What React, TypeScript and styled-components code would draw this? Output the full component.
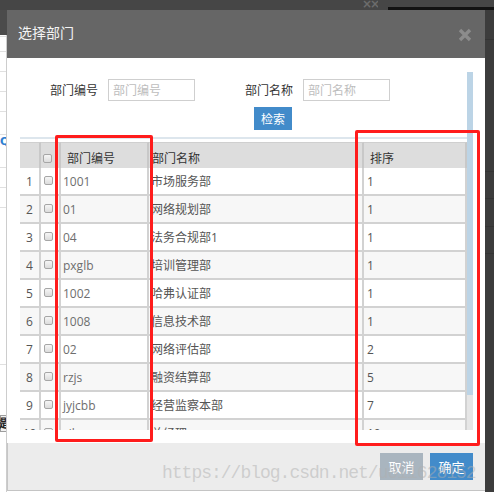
import React from 'react';
import styled, { createGlobalStyle } from 'styled-components';

const GlobalStyle = createGlobalStyle`
  html, body {
    margin: 0;
    padding: 0;
    background: #3c3c3c;
  }
  body {
    font-family: "Open Sans", "Noto Sans CJK SC", sans-serif;
    font-size: 12px;
  }
  * {
    box-sizing: border-box;
  }
`;

const Screen = styled.div`
  position: relative;
  width: 494px;
  height: 492px;
  overflow: hidden;
  display: flex;
  flex-direction: column;
  background: #3c3c3c;
`;

const TopBar = styled.div`
  flex: none;
  height: 10px;
  display: flex;
  align-items: flex-end;
  background: #464646;
`;

const TopGlyph = styled.span`
  align-self: flex-start;
  margin-left: 362px;
  width: 16px;
  height: 10px;
  overflow: hidden;
  color: #6c6c6c;
  font: bold 12px/9px "DejaVu Sans", sans-serif;
  letter-spacing: -2px;
`;

const TopSpacer = styled.div`
  flex: 1;
`;

const BlackBand = styled.div`
  width: 106px;
  height: 3px;
  background: #121212;
`;

const MainRow = styled.div`
  flex: 1;
  display: flex;
`;

const LeftStrip = styled.div`
  width: 7px;
  display: flex;
  flex-direction: column;
`;

const DarkCap = styled.div`
  height: 25px;
  background: #4b4b4b;
`;

const Ledger = styled.div`
  flex: 1;
  display: flex;
  flex-direction: column;
  background: #fff;
  border-right: 1px solid #cdcdcd;
  overflow: hidden;
`;

const LedgerRow = styled.div<{ $h: number; $line?: boolean }>`
  flex: none;
  height: ${p => p.$h}px;
  border-bottom: ${p => (p.$line ? '1px solid #e0e0e0' : 'none')};
  display: flex;
  align-items: center;
  overflow: hidden;
  color: #2f7fd1;
  font: bold 11px/1 "DejaVu Sans", sans-serif;
`;

const CutButton = styled.div`
  width: 14px;
  height: 17px;
  border: 1px solid #9d9d9d;
  background: #f2f2f2;
  color: #222;
  font-size: 12px;
  line-height: 15px;
  text-indent: -5px;
  white-space: nowrap;
`;

const RightStrip = styled.div`
  flex: 1;
  display: flex;
  flex-direction: column;
`;

const ShadeRow = styled.div<{ $h: number }>`
  flex: none;
  height: ${p => p.$h}px;
  border-bottom: 1px solid #343434;
`;

const Modal = styled.div`
  width: 478px;
  display: flex;
  flex-direction: column;
  background: #fff;
`;

const Header = styled.div`
  flex: none;
  height: 48px;
  display: flex;
  align-items: center;
  justify-content: space-between;
  padding: 0 13px 0 11px;
  background: #666666;
`;

const Title = styled.div`
  margin-top: -4px;
  color: #f3f3f3;
  font-size: 14px;
`;

const CloseIcon = styled.svg`
  margin-top: 2px;
  display: block;
`;

const Body = styled.div`
  flex: none;
  height: 385px;
  display: flex;
  padding: 14px 12px 13px 13px;
`;

const ScrollContent = styled.div`
  width: 447px;
  height: 358px;
  overflow: hidden;
`;

const ScrollTrack = styled.div`
  width: 6px;
  height: 358px;
  background: #e6e6e6;
`;

const ScrollThumb = styled.div`
  height: 323px;
  background: #bcd4e6;
`;

const SearchRow = styled.div`
  margin-top: 7px;
  height: 22px;
  display: flex;
  align-items: center;
  padding-left: 30px;
`;

const FieldLabel = styled.span<{ $gap?: number }>`
  margin-left: ${p => p.$gap || 0}px;
  margin-right: 10px;
  color: #333;
  font-size: 12px;
`;

const FieldInput = styled.input`
  width: 87px;
  height: 22px;
  padding: 0 4px;
  border: 1px solid #cfcfcf;
  outline: none;
  font-family: "Open Sans", "Noto Sans CJK SC", sans-serif;
  font-size: 12px;
  color: #333;
  &::placeholder {
    color: #bdbdbd;
  }
`;

const ButtonRow = styled.div`
  margin-top: 6px;
  padding-left: 234px;
`;

const SearchButton = styled.button`
  width: 38px;
  height: 23px;
  padding: 0;
  border: none;
  background: #428bca;
  color: #fff;
  font-family: "Open Sans", "Noto Sans CJK SC", sans-serif;
  font-size: 12px;
`;

const Divider = styled.div`
  margin-top: 7px;
  height: 2px;
  background: #dde6ed;
`;

const Grid = styled.div`
  margin-top: 3px;
  display: grid;
  grid-template-columns: 21px 20px 88px 215px 103px;
`;

const HeadCell = styled.div<{ $indent?: number; $center?: boolean }>`
  height: 26px;
  display: flex;
  align-items: center;
  justify-content: ${p => (p.$center ? 'center' : 'flex-start')};
  padding: 4px 0 0 ${p => p.$indent || 0}px;
  background: #dddddd;
  border-top: 1px solid #cfcfcf;
  border-right: 2px solid #c8c8c8;
  color: #333;
  font-size: 12px;
`;

const Cell = styled.div<{ $shade: boolean; $indent?: number; $center?: boolean; $color?: string }>`
  height: 28px;
  display: flex;
  align-items: center;
  justify-content: ${p => (p.$center ? 'center' : 'flex-start')};
  padding-left: ${p => p.$indent || 0}px;
  background: ${p => (p.$shade ? '#f7f7f7' : '#fff')};
  border-right: 2px solid #d2d2d2;
  border-bottom: 2px solid #d2d2d2;
  color: ${p => p.$color || '#555'};
  font-size: 12px;
  white-space: nowrap;
  overflow: hidden;
`;

const Check = styled.span<{ $head?: boolean }>`
  display: block;
  width: 9px;
  height: 9px;
  margin-top: ${p => (p.$head ? '6px' : '-1px')};
  border: 1px solid #a6a6a6;
  border-radius: 2px;
  background: linear-gradient(#f6f6f6, #dcdcdc);
`;

const Footer = styled.div`
  flex: none;
  height: 48px;
  display: flex;
  justify-content: flex-end;
  align-items: flex-start;
  gap: 7px;
  padding: 10px 12px 0 0;
  background: #ececec;
  border-left: 1px solid #c6c6c6;
  border-bottom: 1px solid #c4c4c4;
`;

const FooterButton = styled.button<{ $primary?: boolean }>`
  width: 43px;
  height: 27px;
  padding: 0;
  border: none;
  background: ${p => (p.$primary ? '#428bca' : '#a9b5bf')};
  color: #fff;
  font-family: "Open Sans", "Noto Sans CJK SC", sans-serif;
  font-size: 13px;
`;

const Watermark = styled.div`
  position: absolute;
  left: 162px;
  top: 464px;
  color: rgba(175, 175, 175, 0.5);
  font-family: "Liberation Mono", monospace;
  font-size: 18px;
  line-height: 18px;
  letter-spacing: -1px;
  white-space: nowrap;
  pointer-events: none;
`;

const Marker = styled.div<{ $x: number; $y: number; $w: number; $h: number }>`
  position: absolute;
  left: ${p => p.$x}px;
  top: ${p => p.$y}px;
  width: ${p => p.$w}px;
  height: ${p => p.$h}px;
  border: 3px solid #ff1c1c;
  border-radius: 2px;
  pointer-events: none;
`;

const departments = [
  { code: '1001', name: '市场服务部', sort: '1' },
  { code: '01', name: '网络规划部', sort: '1' },
  { code: '04', name: '法务合规部1', sort: '1' },
  { code: 'pxglb', name: '培训管理部', sort: '1' },
  { code: '1002', name: '哈弗认证部', sort: '1' },
  { code: '1008', name: '信息技术部', sort: '1' },
  { code: '02', name: '网络评估部', sort: '2' },
  { code: 'rzjs', name: '融资结算部', sort: '5' },
  { code: 'jyjcbb', name: '经营监察本部', sort: '7' },
  { code: 'zjl', name: '总经理', sort: '10' },
  { code: 'cwb', name: '财务部', sort: '11' },
];

const ledgerRows = [2, 15, 20, 20, 20, 23];
const shadeRows = [30, 132, 27, 28, 27];

export default function App() {
  return (
    <>
      <GlobalStyle />
      <Screen>
        <TopBar>
          <TopGlyph>××</TopGlyph>
          <TopSpacer />
          <BlackBand />
        </TopBar>
        <MainRow>
          <LeftStrip>
            <DarkCap />
            <Ledger>
              {ledgerRows.map((h, i) => (
                <LedgerRow key={i} $h={h} $line />
              ))}
              <LedgerRow $h={12}>Q</LedgerRow>
              <LedgerRow $h={21} $line />
              <LedgerRow $h={20} $line />
              <LedgerRow $h={20} $line />
              <LedgerRow $h={157} $line />
              <LedgerRow $h={50} />
              <LedgerRow $h={17}>
                <CutButton>提示</CutButton>
              </LedgerRow>
            </Ledger>
          </LeftStrip>

          <Modal>
            <Header>
              <Title>选择部门</Title>
              <CloseIcon width="14" height="14" viewBox="0 0 14 14">
                <path d="M2 2 L12 12 M12 2 L2 12" stroke="#8c8c8c" strokeWidth="3.4" />
              </CloseIcon>
            </Header>

            <Body>
              <ScrollContent>
                <SearchRow>
                  <FieldLabel>部门编号</FieldLabel>
                  <FieldInput placeholder="部门编号" />
                  <FieldLabel $gap={50}>部门名称</FieldLabel>
                  <FieldInput placeholder="部门名称" />
                </SearchRow>
                <ButtonRow>
                  <SearchButton>检索</SearchButton>
                </ButtonRow>
                <Divider />
                <Grid>
                  <HeadCell />
                  <HeadCell $indent={2} style={{ paddingTop: 0 }}>
                    <Check $head />
                  </HeadCell>
                  <HeadCell $indent={6}>部门编号</HeadCell>
                  <HeadCell $indent={3}>部门名称</HeadCell>
                  <HeadCell $indent={6}>排序</HeadCell>
                  {departments.map((d, i) => {
                    const shade = i % 2 === 1;
                    return (
                      <React.Fragment key={d.code}>
                        <Cell $shade={shade} $center>{i + 1}</Cell>
                        <Cell $shade={shade} $indent={3}>
                          <Check />
                        </Cell>
                        <Cell $shade={shade} $indent={2} $color="#6e6e6e">{d.code}</Cell>
                        <Cell $shade={shade} $indent={2}>{d.name}</Cell>
                        <Cell $shade={shade} $indent={3}>{d.sort}</Cell>
                      </React.Fragment>
                    );
                  })}
                </Grid>
              </ScrollContent>
              <ScrollTrack>
                <ScrollThumb />
              </ScrollTrack>
            </Body>

            <Footer>
              <FooterButton>取消</FooterButton>
              <FooterButton $primary>确定</FooterButton>
            </Footer>
          </Modal>

          <RightStrip>
            {shadeRows.map((h, i) => (
              <ShadeRow key={i} $h={h} />
            ))}
          </RightStrip>
        </MainRow>

        <Watermark>https://blog.csdn.net/u011628152</Watermark>
        <Marker $x={55} $y={135} $w={98} $h={307} />
        <Marker $x={355} $y={130} $w={125} $h={316} />
      </Screen>
    </>
  );
}
